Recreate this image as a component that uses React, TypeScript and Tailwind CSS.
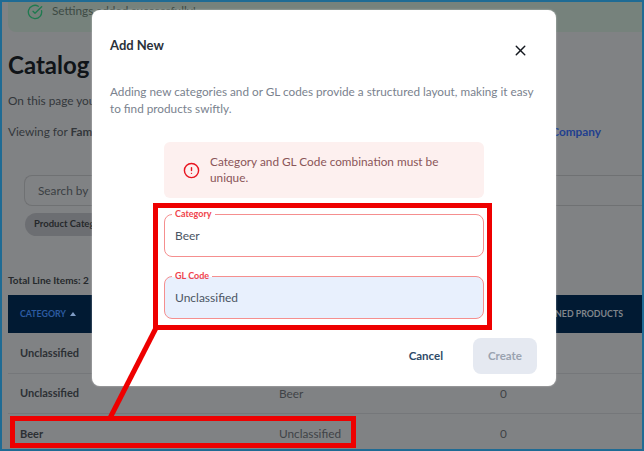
import React from 'react';
import { X, CircleAlert, CircleCheckBig } from 'lucide-react';

const rows = [
  { category: 'Unclassified', gl: '', count: '' },
  { category: 'Unclassified', gl: 'Beer', count: '0' },
  { category: 'Beer', gl: 'Unclassified', count: '0' },
];

const Field: React.FC<{ label: string; value: string; filled?: boolean }> = ({ label, value, filled }) => (
  <div className={`relative h-[43px] rounded-lg border border-[#f58f8f] flex items-center px-[10px] ${filled ? 'bg-[#e8f0fd]' : 'bg-white'}`}>
    <span className="absolute -top-[8px] left-[7px] bg-[linear-gradient(#fff_62%,transparent_62%)] px-[3px] text-[9px] leading-[13px] font-bold text-[#f0434b]">{label}</span>
    <span className="text-[12px] text-[#4b5563]">{value}</span>
  </div>
);

export default function App() {
  return (
    <div className="relative h-[451px] w-[644px] overflow-hidden border-2 border-[#1f6b94] bg-[#808284] font-['Lato',sans-serif] text-[#2b2f33]">
      {/* page behind the modal */}
      <div className="ml-[6px] h-[30px] rounded-bl-lg bg-[#76827c] flex items-start gap-[9px] pl-[19px] text-[11.8px] text-[#3d4a44]">
        <CircleCheckBig size={16} strokeWidth={2} className="text-[#1f7a50] mt-[2px]" />
        <span>Settings added successfully!</span>
      </div>
      <div className="pl-[6px] pt-[18px]">
        <h1 className="text-[24px] leading-[30px] font-bold text-[#101418]">Catalog</h1>
        <p className="mt-[13px] text-[11.8px] leading-[16px] text-[#33373b]">On this page you</p>
        <div className="mt-[15px] flex text-[11.8px] leading-[16px] text-[#33373b]">
          <span>Viewing for <b className="font-bold">Family</b></span>
          <span className="ml-auto mr-[41px] font-bold text-[#1f3f8f]">Company</span>
        </div>
      </div>
      <div className="mt-[35px] ml-[22px] h-[31px] rounded-l-lg border border-r-0 border-[#6f7173] flex items-center pl-[13px] text-[11.8px] text-[#3b3f43]">Search by</div>
      <div className="mt-[7px] ml-[23px] h-[23px] w-[90px] rounded-full bg-[#6c6e72] flex items-center pl-[9px] text-[9.5px] font-bold text-[#25282b] whitespace-nowrap">Product Category</div>
      <p className="mt-[37px] ml-[6px] text-[10px] leading-[14px] font-bold text-[#26292c]">Total Line Items: 2</p>
      <div className="mt-[8px] ml-[6px] h-[38px] bg-[#011a33] flex items-center justify-between pl-[12px] pr-[19px] text-[8.8px] font-bold">
        <span className="flex items-center gap-[4px] text-[#2c5aa0]">
          CATEGORY
          <svg width="6" height="4" viewBox="0 0 6 4"><polygon points="3,0 6,4 0,4" fill="#7f9cc4" /></svg>
        </span>
        <span className="text-[#80868c]">ASSIGNED PRODUCTS</span>
      </div>
      <div className="ml-[6px] pt-[1px]">
        {rows.map((row, i) => (
          <div key={i} className="grid grid-cols-[259px_221px_1fr] h-[40px] items-center border-b border-[#75777a] last:border-0 pl-[12px] text-[11.8px]">
            <span className="text-[11px] font-bold text-[#2c3034]">{row.category}</span>
            <span className="text-[#3f4347]">{row.gl}</span>
            <span className="text-[#3f4347]">{row.count}</span>
          </div>
        ))}
      </div>

      {/* modal */}
      <div className="absolute left-[90px] top-[8px] w-[464px] h-[376px] rounded-lg bg-white pl-[18px] pr-[19px] pt-[25px] shadow-[0_0_2px_rgba(255,255,255,0.6)]">
        <div className="flex items-start justify-between">
          <h2 className="text-[13px] leading-[20px] font-bold text-[#2b313a]">Add New</h2>
          <X size={17} strokeWidth={2} className="mr-[8px] mt-[7px] text-[#14181f]" />
        </div>
        <p className="mt-[25px] text-[11.75px] leading-[16.5px] text-[#7a828e]">
          Adding new categories and or GL codes provide a structured layout, making it easy to find products swiftly.
        </p>
        <div className="ml-[54px] w-[320px]">
          <div className="mt-[25px] h-[56px] rounded-md bg-[#fdf0ef] flex items-center gap-[10px] pl-[19px] pr-[30px]">
            <CircleAlert size={17} strokeWidth={2} className="shrink-0 text-[#e8141f]" />
            <p className="max-w-[235px] text-[11.8px] leading-[16px] text-[#8a5558]">Category and GL Code combination must be unique.</p>
          </div>
          <div className="mt-[16px] flex flex-col gap-[19px]">
            <Field label="Category" value="Beer" />
            <Field label="GL Code" value="Unclassified" filled />
          </div>
        </div>
        <div className="mt-[19px] flex items-center justify-end gap-[30px]">
          <span className="text-[11.5px] font-bold text-[#2f4a68]">Cancel</span>
          <span className="w-[64px] h-[36px] rounded-lg bg-[#e5e9f1] flex items-center justify-center text-[11.5px] font-bold text-[#9aa3b0]">Create</span>
        </div>
      </div>

      {/* red callout drawn over the screenshot */}
      <div className="absolute left-[151px] top-[201px] w-[339px] h-[127px] border-[5px] border-[#ee0000]" />
      <div className="absolute left-[8px] top-[414px] w-[346px] h-[32px] border-[5px] border-[#ee0000]" />
      <svg className="absolute left-[100px] top-[322px]" width="60" height="96" viewBox="0 0 60 96">
        <line x1="55" y1="2" x2="8" y2="94" stroke="#ee0000" strokeWidth="5" />
      </svg>
    </div>
  );
}
